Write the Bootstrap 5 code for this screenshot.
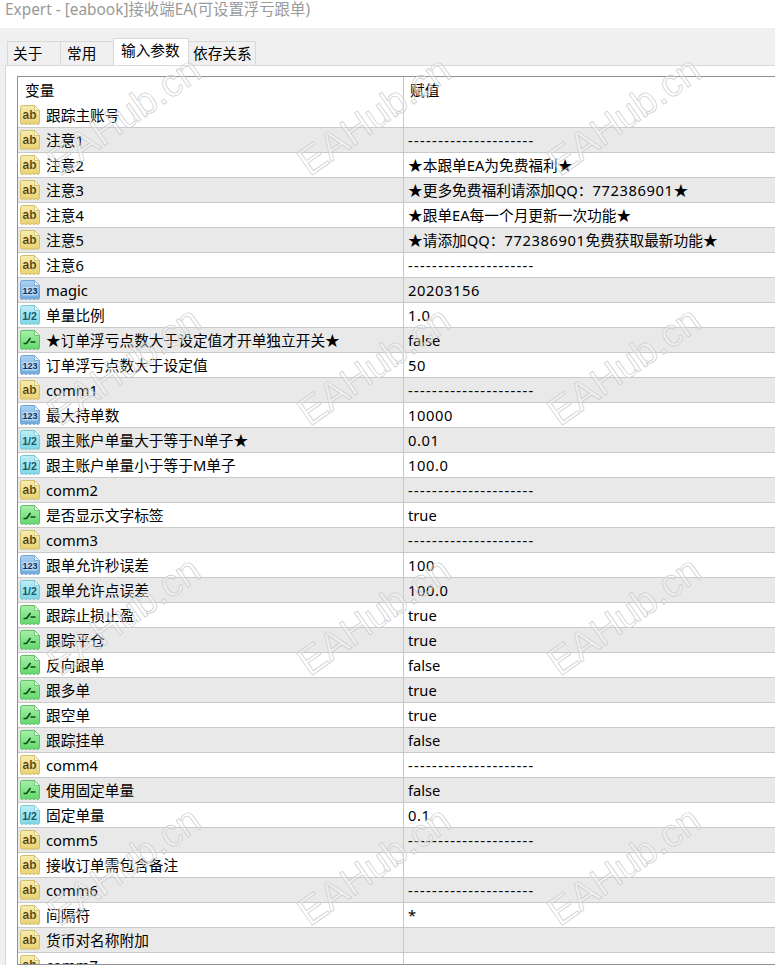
<!DOCTYPE html>
<html lang="zh">
<head>
<meta charset="utf-8">
<title>Expert</title>
<link href="https://cdn.jsdelivr.net/npm/bootstrap@5.3.0/dist/css/bootstrap.min.css" rel="stylesheet">
<style>
html,body{height:965px;overflow:hidden;}
body{position:relative;background:#f0f0f0;font-family:"Noto Sans","Noto Sans CJK SC",sans-serif;font-size:14.7px;color:#000;}
.title-strip{height:28px;background:#fff;color:#9a9a9a;font-size:15.4px;line-height:20px;padding:0 0 0 5px;white-space:nowrap;}
.dlg{padding:12px 0 0 5px;height:937px;}
.tabs-row{height:25px;margin-left:2px;align-items:flex-end;}
.tab-item{height:24px;border:1px solid #d9d9d9;border-bottom:0;background:#f0f0f0;line-height:22px;padding:0 5px;margin-right:0;font-size:14.67px;white-space:nowrap;}
.tab-one{width:54px;padding-left:5px;}
.tab-two{width:54px;padding-left:6px;margin-left:-1px;}
.tab-on{height:27px;width:76px;background:#fff;margin-left:-1px;padding-left:7px;line-height:23px;position:relative;z-index:1;}
.tab-last{width:68px;margin-left:-1px;padding-left:4px;}
.pane{background:#fff;border:1px solid #d9d9d9;border-right:0;border-bottom:0;padding:10px 0 0 11px;height:900px;}
.gridbox{border:1px solid #8f8f98;border-right:0;height:889px;overflow:hidden;background:#fff;}
.params{table-layout:fixed;width:760px;margin:0;border-collapse:separate;border-spacing:0;--bs-table-bg:transparent;--bs-table-color:#000;}
.params td,.params th{height:25px;padding:0;border:0;border-bottom:1px solid #c9c9c9;font-weight:400;line-height:24px;white-space:nowrap;overflow:hidden;vertical-align:middle;box-shadow:none;}
.params th{height:26px;border-bottom:0;line-height:25px;padding-top:1px;}
.params .namecol{width:385px;}
.params td+td,.params th+th{border-left:1px solid #c9c9c9;padding-left:4px;}
.params th.namecell{padding-left:7px;}
.params th+th{padding-left:6px;}
.params tbody tr:nth-child(even) td{background:#e9e9e9;}
.rowname{display:flex;align-items:center;gap:5px;padding-left:1px;}
.glyph{width:22px;height:22px;flex:none;}
.digits{letter-spacing:.6px;}
.dashes{letter-spacing:1.3px;}
.mark-on{position:absolute;font-family:"Liberation Sans",sans-serif;font-size:39px;line-height:1;color:rgba(255,255,255,.3);-webkit-text-stroke:.7px #cbcbcb;transform:rotate(-35deg);transform-origin:0 100%;white-space:nowrap;pointer-events:none;z-index:5;}
.mk-a{left:63px}.mk-b{left:313px}.mk-c{left:563px}
.mk-1{top:143px}.mk-2{top:393px}.mk-3{top:643px}.mk-4{top:893px}
</style>
</head>
<body>
<svg width="0" height="0" class="position-absolute">
  <defs>
    <linearGradient id="gr-ab" x1="0" y1="0" x2="0" y2="1"><stop offset="0" stop-color="#f6ecae"/><stop offset="1" stop-color="#e9d271"/></linearGradient>
    <linearGradient id="gr-int" x1="0" y1="0" x2="0" y2="1"><stop offset="0" stop-color="#a9d2f2"/><stop offset="1" stop-color="#6ea8dc"/></linearGradient>
    <linearGradient id="gr-dbl" x1="0" y1="0" x2="0" y2="1"><stop offset="0" stop-color="#bdeef5"/><stop offset="1" stop-color="#7fd6e6"/></linearGradient>
    <linearGradient id="gr-bool" x1="0" y1="0" x2="0" y2="1"><stop offset="0" stop-color="#a8efa8"/><stop offset="1" stop-color="#62d86c"/></linearGradient>
  </defs>
  <symbol id="ic-ab" viewBox="0 0 22 22"><path d="M3.500 1.500H15.500L20.500 6.500V18.500Q20.500 20 19 20.500L17 19.500 15 20.500 13 19.500 11 20.500 9 19.500 7 20.500 5 19.500 3 20.500Q1.500 20 1.500 18.500V3.500Q1.500 1.500 3.500 1.500Z" fill="url(#gr-ab)" stroke="#d2bd68"/><path d="M15.500 1.500V6.500H20.500Z" fill="#fffbe6" stroke="#d2bd68" stroke-width=".8"/><text x="10.500" y="15" font-size="12" font-weight="700" text-anchor="middle" font-family="Liberation Sans, sans-serif" fill="#3d3208" stroke="#fff7c8" stroke-width=".2">ab</text></symbol>
  <symbol id="ic-int" viewBox="0 0 22 22"><path d="M3.500 1.500H15.500L20.500 6.500V18.500Q20.500 20 19 20.500L17 19.500 15 20.500 13 19.500 11 20.500 9 19.500 7 20.500 5 19.500 3 20.500Q1.500 20 1.500 18.500V3.500Q1.500 1.500 3.500 1.500Z" fill="url(#gr-int)" stroke="#74a4cf"/><path d="M15.500 1.500V6.500H20.500Z" fill="#eef7fd" stroke="#74a4cf" stroke-width=".8"/><rect x="3.500" y="8" width="15" height="8.500" fill="#cfe6f8" opacity=".7"/><text x="11" y="15.200" font-size="9" font-weight="700" text-anchor="middle" font-family="Liberation Sans, sans-serif" fill="#12305c">123</text></symbol>
  <symbol id="ic-dbl" viewBox="0 0 22 22"><path d="M3.500 1.500H15.500L20.500 6.500V18.500Q20.500 20 19 20.500L17 19.500 15 20.500 13 19.500 11 20.500 9 19.500 7 20.500 5 19.500 3 20.500Q1.500 20 1.500 18.500V3.500Q1.500 1.500 3.500 1.500Z" fill="url(#gr-dbl)" stroke="#7cc6d6"/><path d="M15.500 1.500V6.500H20.500Z" fill="#effbfd" stroke="#7cc6d6" stroke-width=".8"/><text x="10.500" y="15.500" font-size="10.500" font-weight="700" text-anchor="middle" font-family="Liberation Sans, sans-serif" fill="#155a6b">1/2</text></symbol>
  <symbol id="ic-bool" viewBox="0 0 22 22"><path d="M3.500 1.500H15.500L20.500 6.500V18.500Q20.500 20 19 20.500L17 19.500 15 20.500 13 19.500 11 20.500 9 19.500 7 20.500 5 19.500 3 20.500Q1.500 20 1.500 18.500V3.500Q1.500 1.500 3.500 1.500Z" fill="url(#gr-bool)" stroke="#62bd6a"/><path d="M15.500 1.500V6.500H20.500Z" fill="#eafcec" stroke="#62bd6a" stroke-width=".8"/><path d="M4.500 14.500H7.500L11.500 9M11.500 13H16.500" fill="none" stroke="#0f4a14" stroke-width="1.700"/></symbol>
</svg>

<div class="title-strip">Expert - [eabook]接收端EA(可设置浮亏跟单)</div>
<div class="dlg">
  <div class="tabs-row d-flex">
    <div class="tab-item tab-one">关于</div>
    <div class="tab-item tab-two">常用</div>
    <div class="tab-item tab-on">输入参数</div>
    <div class="tab-item tab-last">依存关系</div>
  </div>
  <div class="pane">
    <div class="gridbox">
      <table class="table params">
        <colgroup><col class="namecol"><col></colgroup>
        <thead><tr><th class="namecell">变量</th><th>赋值</th></tr></thead>
        <tbody>
<tr><td><div class="rowname"><svg class="glyph"><use href="#ic-ab"/></svg>跟踪主账号</div></td><td></td></tr>
<tr><td><div class="rowname"><svg class="glyph"><use href="#ic-ab"/></svg>注意1</div></td><td class="dashes">---------------------</td></tr>
<tr><td><div class="rowname"><svg class="glyph"><use href="#ic-ab"/></svg>注意2</div></td><td>★本跟单EA为免费福利★</td></tr>
<tr><td><div class="rowname"><svg class="glyph"><use href="#ic-ab"/></svg>注意3</div></td><td>★更多免费福利请添加QQ：<span class="digits">772386901</span>★</td></tr>
<tr><td><div class="rowname"><svg class="glyph"><use href="#ic-ab"/></svg>注意4</div></td><td>★跟单EA每一个月更新一次功能★</td></tr>
<tr><td><div class="rowname"><svg class="glyph"><use href="#ic-ab"/></svg>注意5</div></td><td>★请添加QQ：<span class="digits">772386901</span>免费获取最新功能★</td></tr>
<tr><td><div class="rowname"><svg class="glyph"><use href="#ic-ab"/></svg>注意6</div></td><td class="dashes">---------------------</td></tr>
<tr><td><div class="rowname"><svg class="glyph"><use href="#ic-int"/></svg>magic</div></td><td class="digits">20203156</td></tr>
<tr><td><div class="rowname"><svg class="glyph"><use href="#ic-dbl"/></svg>单量比例</div></td><td class="digits">1.0</td></tr>
<tr><td><div class="rowname"><svg class="glyph"><use href="#ic-bool"/></svg>★订单浮亏点数大于设定值才开单独立开关★</div></td><td>false</td></tr>
<tr><td><div class="rowname"><svg class="glyph"><use href="#ic-int"/></svg>订单浮亏点数大于设定值</div></td><td class="digits">50</td></tr>
<tr><td><div class="rowname"><svg class="glyph"><use href="#ic-ab"/></svg>comm1</div></td><td class="dashes">---------------------</td></tr>
<tr><td><div class="rowname"><svg class="glyph"><use href="#ic-int"/></svg>最大持单数</div></td><td class="digits">10000</td></tr>
<tr><td><div class="rowname"><svg class="glyph"><use href="#ic-dbl"/></svg>跟主账户单量大于等于N单子★</div></td><td class="digits">0.01</td></tr>
<tr><td><div class="rowname"><svg class="glyph"><use href="#ic-dbl"/></svg>跟主账户单量小于等于M单子</div></td><td class="digits">100.0</td></tr>
<tr><td><div class="rowname"><svg class="glyph"><use href="#ic-ab"/></svg>comm2</div></td><td class="dashes">---------------------</td></tr>
<tr><td><div class="rowname"><svg class="glyph"><use href="#ic-bool"/></svg>是否显示文字标签</div></td><td>true</td></tr>
<tr><td><div class="rowname"><svg class="glyph"><use href="#ic-ab"/></svg>comm3</div></td><td class="dashes">---------------------</td></tr>
<tr><td><div class="rowname"><svg class="glyph"><use href="#ic-int"/></svg>跟单允许秒误差</div></td><td class="digits">100</td></tr>
<tr><td><div class="rowname"><svg class="glyph"><use href="#ic-dbl"/></svg>跟单允许点误差</div></td><td class="digits">100.0</td></tr>
<tr><td><div class="rowname"><svg class="glyph"><use href="#ic-bool"/></svg>跟踪止损止盈</div></td><td>true</td></tr>
<tr><td><div class="rowname"><svg class="glyph"><use href="#ic-bool"/></svg>跟踪平仓</div></td><td>true</td></tr>
<tr><td><div class="rowname"><svg class="glyph"><use href="#ic-bool"/></svg>反向跟单</div></td><td>false</td></tr>
<tr><td><div class="rowname"><svg class="glyph"><use href="#ic-bool"/></svg>跟多单</div></td><td>true</td></tr>
<tr><td><div class="rowname"><svg class="glyph"><use href="#ic-bool"/></svg>跟空单</div></td><td>true</td></tr>
<tr><td><div class="rowname"><svg class="glyph"><use href="#ic-bool"/></svg>跟踪挂单</div></td><td>false</td></tr>
<tr><td><div class="rowname"><svg class="glyph"><use href="#ic-ab"/></svg>comm4</div></td><td class="dashes">---------------------</td></tr>
<tr><td><div class="rowname"><svg class="glyph"><use href="#ic-bool"/></svg>使用固定单量</div></td><td>false</td></tr>
<tr><td><div class="rowname"><svg class="glyph"><use href="#ic-dbl"/></svg>固定单量</div></td><td class="digits">0.1</td></tr>
<tr><td><div class="rowname"><svg class="glyph"><use href="#ic-ab"/></svg>comm5</div></td><td class="dashes">---------------------</td></tr>
<tr><td><div class="rowname"><svg class="glyph"><use href="#ic-ab"/></svg>接收订单需包含备注</div></td><td></td></tr>
<tr><td><div class="rowname"><svg class="glyph"><use href="#ic-ab"/></svg>comm6</div></td><td class="dashes">---------------------</td></tr>
<tr><td><div class="rowname"><svg class="glyph"><use href="#ic-ab"/></svg>间隔符</div></td><td>*</td></tr>
<tr><td><div class="rowname"><svg class="glyph"><use href="#ic-ab"/></svg>货币对名称附加</div></td><td></td></tr>
<tr><td><div class="rowname"><svg class="glyph"><use href="#ic-ab"/></svg>comm7</div></td><td class="dashes">---------------------</td></tr>
        </tbody>
      </table>
    </div>
  </div>
</div>
<div class="mark-on mk-a mk-1">EAHub.cn</div><div class="mark-on mk-b mk-1">EAHub.cn</div><div class="mark-on mk-c mk-1">EAHub.cn</div>
<div class="mark-on mk-a mk-2">EAHub.cn</div><div class="mark-on mk-b mk-2">EAHub.cn</div><div class="mark-on mk-c mk-2">EAHub.cn</div>
<div class="mark-on mk-a mk-3">EAHub.cn</div><div class="mark-on mk-b mk-3">EAHub.cn</div><div class="mark-on mk-c mk-3">EAHub.cn</div>
<div class="mark-on mk-a mk-4">EAHub.cn</div><div class="mark-on mk-b mk-4">EAHub.cn</div><div class="mark-on mk-c mk-4">EAHub.cn</div>
<script src="https://cdn.jsdelivr.net/npm/bootstrap@5.3.0/dist/js/bootstrap.bundle.min.js"></script>
</body>
</html>
